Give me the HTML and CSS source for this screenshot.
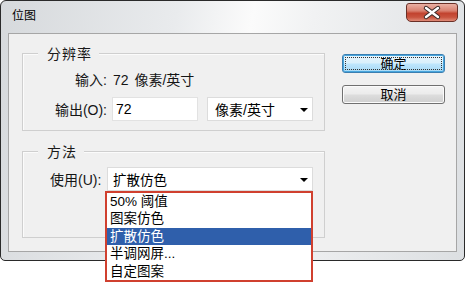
FILE: index.html
```html
<!DOCTYPE html>
<html lang="zh-CN">
<head>
    <meta charset="UTF-8">
    <title>位图</title>
    <link rel="stylesheet" href="styles.css">
</head>
<body>
    <div class="window">
        <div class="titlebar">
            <span class="title">位图</span>
            <span class="close">
                <svg width="50" height="17" viewBox="0 0 50 17">
                    <path d="M19 4 L31 13 M31 4 L19 13" stroke="#3a2a28" stroke-width="4.4" stroke-linecap="round"/>
                    <path d="M19 4 L31 13 M31 4 L19 13" stroke="#ffffff" stroke-width="2.4" stroke-linecap="round"/>
                </svg>
            </span>
        </div>

        <div class="client">
            <div class="groups">
                <!-- 分辨率 -->
                <div class="group res">
                    <span class="legend">分辨率</span>
                    <div class="row first">
                        <span class="label">输入:</span>
                        <span class="value">72 像素/英寸</span>
                    </div>
                    <div class="row second">
                        <span class="label">输出(O):</span>
                        <span class="input">72</span>
                        <span class="select unit">像素/英寸<i class="arrow"></i></span>
                    </div>
                </div>

                <!-- 方法 -->
                <div class="group method">
                    <span class="legend">方法</span>
                    <div class="row use">
                        <span class="label">使用(U):</span>
                        <div class="select-wrap">
                            <span class="select">扩散仿色<i class="arrow"></i></span>
                            <ul class="dropdown">
                                <li>50% 阈值</li>
                                <li>图案仿色</li>
                                <li class="active">扩散仿色</li>
                                <li>半调网屏...</li>
                                <li>自定图案</li>
                            </ul>
                        </div>
                    </div>
                </div>
            </div>

            <div class="buttons">
                <button class="btn default">确定</button>
                <button class="btn">取消</button>
            </div>
        </div>
    </div>
</body>
</html>
```

FILE: styles.css
```css
* {
    box-sizing: border-box;
}

html,
body {
    min-height: 286px;
}

body {
    margin: 0;
    background: #ffffff;
    font-family: "Liberation Sans", "Noto Sans CJK SC", sans-serif;
    font-size: 14px;
    color: #151515;
}

.window {
    width: 465px;
    height: 261px;
    border: 1px solid #2a2a2a;
    border-radius: 6px 6px 5px 5px;
    padding: 0 7px 8px;
    background: linear-gradient(100deg, #d6d9dc 0%, #e9ebed 35%, #fbfbfb 50%, #f1f2f3 62%, #dcdfe2 100%);
    display: flex;
    flex-direction: column;
}

.titlebar {
    height: 32px;
    display: flex;
    justify-content: space-between;
    align-items: flex-start;
}

.title {
    margin: 7px 0 0 4px;
    font-size: 12px;
    line-height: 16px;
    color: #000;
}

.close {
    width: 52px;
    height: 19px;
    margin: 2px -1px 0 0;
    border: 1px solid #6a3027;
    border-radius: 3px 3px 5px 5px;
    background: linear-gradient(#eab0a3 0%, #d98170 40%, #c2432f 55%, #c9543f 78%, #e08b78 100%);
    display: flex;
}

.client {
    height: 219px;
    border: 1px solid #a6a6a6;
    background: #f0f0f0;
    display: flex;
    gap: 17px;
    padding: 19px 0 0 13px;
}

.groups {
    width: 303px;
}

.group {
    border: 1px solid #cfcfcf;
    box-shadow: inset 1px 1px 0 #fbfbfb;
}

.legend {
    display: block;
    width: fit-content;
    margin: -9px 0 0 15px;
    padding: 0 7px 0 9px;
    line-height: 18px;
    letter-spacing: 1px;
    background: #f0f0f0;
    color: #1a1a1a;
}

.res {
    padding-bottom: 9px;
}

.method {
    margin-top: 20px;
    padding-bottom: 46px;
}

.row {
    display: flex;
    align-items: center;
}

.row.first {
    margin-top: 8px;
    padding-left: 22px;
    line-height: 18px;
}

.row.second {
    margin-top: 8px;
    padding-left: 22px;
    height: 24px;
}

.row.first .label,
.row.second .label {
    width: 62px;
    text-align: right;
}

.row.first .value {
    margin-left: 6px;
    word-spacing: 2px;
}

.input {
    width: 86px;
    height: 24px;
    margin-left: 5px;
    padding-left: 3px;
    border: 1px solid #e2e2e2;
    background: #ffffff;
    line-height: 22px;
    color: #000;
}

.select {
    height: 24px;
    border: 1px solid #dcdcdc;
    background: #ffffff;
    display: flex;
    align-items: center;
    padding-left: 5px;
    font-size: 13.5px;
    color: #000;
}

.select.unit {
    width: 106px;
    margin-left: 9px;
    padding-left: 7px;
    font-size: 14px;
}

.arrow {
    margin: 1px 4px 0 auto;
    border-left: 4px solid transparent;
    border-right: 4px solid transparent;
    border-top: 4px solid #000;
}

.row.use {
    margin-top: 6px;
    padding-left: 27px;
}

.row.use .label {
    width: 57px;
}

.select-wrap {
    position: relative;
    width: 206px;
}

.dropdown {
    position: absolute;
    left: -2px;
    top: 24px;
    width: 208px;
    margin: 0;
    padding: 0;
    list-style: none;
    border: 2px solid #d0402f;
    background: #ffffff;
    z-index: 2;
}

.dropdown li {
    height: 17.4px;
    line-height: 17.4px;
    padding-left: 3px;
    font-size: 13.5px;
    color: #000;
}

.dropdown li.active {
    background: #2f5fab;
    color: #ffffff;
}

.buttons {
    padding-top: 1px;
    display: flex;
    flex-direction: column;
    gap: 12px;
}

.btn {
    position: relative;
    width: 103px;
    height: 19px;
    padding: 0;
    border: 1px solid #707070;
    border-radius: 3px;
    background: linear-gradient(#f4f4f4 0%, #ebebeb 48%, #dddddd 52%, #cfcfcf 100%);
    box-shadow: inset 0 0 0 1px #fbfbfb;
    font-family: "Liberation Sans", "Noto Sans CJK SC", sans-serif;
    font-size: 13px;
    line-height: 17px;
    color: #000;
}

.btn.default {
    border-color: #3c7fb1;
    background: linear-gradient(#eaf6fd 0%, #d9f0fc 48%, #bee6fd 52%, #a7d9f5 100%);
    box-shadow: inset 0 0 0 1px #48a6dd;
}

.btn.default::after {
    content: "";
    position: absolute;
    inset: 2px;
    border: 1px dotted #333;
}
```
